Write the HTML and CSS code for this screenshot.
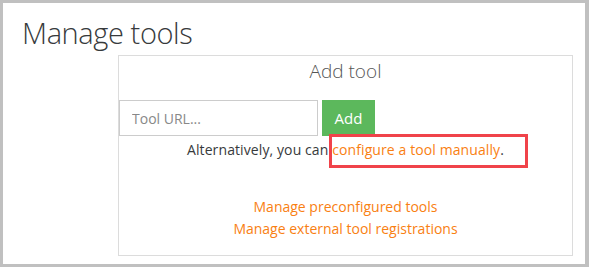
FILE: index.html
```html
<!DOCTYPE html>
<html lang="en">
<head>
  <meta charset="UTF-8">
  <title>Manage tools</title>
  <link rel="stylesheet" href="styles.css">
</head>
<body>
  <div class="frame">
    <h1>Manage tools</h1>

    <div class="tool-box">
      <h3>Add tool</h3>
      <form class="add-row">
        <input type="text" placeholder="Tool URL...">
        <button type="button">Add</button>
      </form>
      <p class="alt">Alternatively, you can <span class="mark"><a href="#">configure a tool manually</a>.</span></p>
      <div class="links">
        <a href="#">Manage preconfigured tools</a>
        <a href="#">Manage external tool registrations</a>
      </div>
    </div>
  </div>
</body>
</html>
```

FILE: styles.css
```css
* { margin: 0; padding: 0; box-sizing: border-box; }
html, body { height: 100%; }
body { font-family: 'Open Sans', sans-serif; color: #373a3c; background: #fff; }
a { color: #f98012; text-decoration: none; }

.frame { height: 267px; border: 3px solid #c0c0c0; border-right-width: 4px; background: #fff; padding: 12px 0 0 19px; }
h1 { font-size: 29px; font-weight: 300; line-height: 36px; color: #373a3c; letter-spacing: -0.4px; }

.tool-box { width: 455px; height: 201px; margin: 4px 0 0 96px; border: 1px solid #dcdcdc; text-align: center; }
.tool-box h3 { font-size: 19px; font-weight: 300; line-height: 28px; margin-top: 1px; color: #555; }
.add-row { display: flex; gap: 4px; margin-top: 15px; }
.add-row input { width: 199px; height: 36px; border: 1px solid #ccc; padding: 0 12px; font: inherit; font-size: 14px; color: #555; }
.add-row input::placeholder { color: #888; }
.add-row button { width: 53px; height: 36px; border: none; background: #5cb85c; color: #fff; font: inherit; font-size: 15px; }

.alt { font-size: 14px; line-height: 20px; margin-top: 4px; letter-spacing: 0.1px; }
.mark { position: relative; }
.mark::after { content: ''; position: absolute; left: -3px; right: -24px; top: -6px; bottom: -9px; border: 3px solid #f0434a; }

.links { margin-top: 36px; display: flex; flex-direction: column; align-items: center; font-size: 14px; line-height: 22px; }
```
